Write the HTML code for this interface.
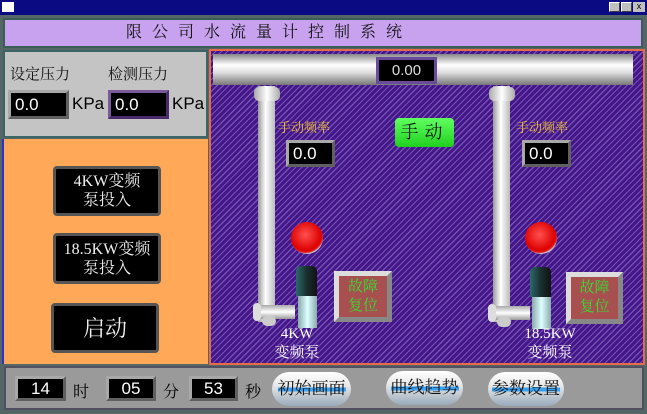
<!DOCTYPE html>
<html><head><meta charset="utf-8"><style>
*{margin:0;padding:0;box-sizing:border-box}
body{width:647px;height:414px;background:#4e6262;position:relative;overflow:hidden;font-family:"Liberation Serif","Noto Serif CJK SC",serif}
.a{position:absolute}
.disp{position:absolute;background:#000;color:#fff;font-family:"Liberation Sans",sans-serif;border:3px solid #a8a8a8;border-right-color:#606060;border-bottom-color:#606060}
.btn{position:absolute;background:#000;color:#f0f0f0;border:3px solid #555;border-radius:4px;text-align:center;font-size:16px;line-height:19px;display:flex;align-items:center;justify-content:center}
.pill{position:absolute;height:34px;border-radius:17px;background:linear-gradient(#fff,#e8e8e8 40%,#9ab 100%);text-align:center;font-size:17px;line-height:34px;color:#111}
.pill span{background:linear-gradient(transparent 45%,#3aa0f0 45%,#3aa0f0 65%,transparent 65%)}
.cn{font-family:"Liberation Serif","Noto Serif CJK SC",serif}
</style></head><body>
<div class="a" style="left:0;top:0;width:647px;height:15px;background:#0a0a82"></div>
<div class="a" style="left:2px;top:2px;width:12px;height:10px;background:#fff"></div>
<div class="a" style="left:609px;top:2px;width:11px;height:10px;background:#c0c0c0;border:1px solid #fff;border-right-color:#404040;border-bottom-color:#404040"></div>
<div class="a" style="left:621px;top:2px;width:11px;height:10px;background:#c0c0c0;border:1px solid #fff;border-right-color:#404040;border-bottom-color:#404040"></div>
<div class="a" style="left:633px;top:2px;width:12px;height:10px;background:#c0c0c0;font:9px 'Liberation Sans';line-height:9px;text-align:center">x</div>
<div class="a" style="left:0;top:15px;width:647px;height:399px;background:#556666"></div>
<div class="a" style="left:3px;top:18px;width:640px;height:30px;background:#c8a2ee;border:2px solid #3c5c58;font-size:16px;letter-spacing:10px;line-height:26px;padding-left:121px;color:#111">限公司水流量计控制系统</div>
<div class="a" style="left:3px;top:50px;width:205px;height:88px;background:#c4c4c4;border:2px solid #3c6464"></div>
<div class="a cn" style="left:10px;top:63px;font-size:15px;color:#111">设定压力</div>
<div class="a cn" style="left:108px;top:63px;font-size:15px;color:#111">检测压力</div>
<div class="disp" style="left:8px;top:90px;width:61px;height:29px;font-size:17px;line-height:23px;padding-left:4px">0.0</div>
<div class="a" style="left:72px;top:94px;font:17px 'Liberation Sans',sans-serif">KPa</div>
<div class="disp" style="left:108px;top:90px;width:61px;height:29px;font-size:17px;line-height:23px;padding-left:4px;border-color:#7a5a9a #4a2a6a #4a2a6a #7a5a9a">0.0</div>
<div class="a" style="left:172px;top:94px;font:17px 'Liberation Sans',sans-serif">KPa</div>
<div class="a" style="left:2px;top:139px;width:206px;height:225px;background:#fea858;border-left:2px solid #3030d0"></div>
<div class="btn" style="left:53px;top:166px;width:108px;height:50px">4KW变频<br>泵投入</div>
<div class="btn" style="left:53px;top:233px;width:108px;height:51px">18.5KW变频<br>泵投入</div>
<div class="btn" style="left:51px;top:303px;width:108px;height:50px;font-size:22px">启动</div>
<div class="a" style="left:209px;top:49px;width:436px;height:316px;border:2px solid #e86a48;background:repeating-linear-gradient(135deg,#45168a 0 3px,#7252b0 3px 4.2px)"></div>
<div class="a" style="left:213px;top:54px;width:420px;height:31px;background:linear-gradient(#888,#fff 35%,#ddd 60%,#777)"></div>
<div class="disp" style="left:376px;top:57px;width:61px;height:27px;font-size:15px;line-height:21px;text-align:center;border-color:#6a4a9a;color:#ddd">0.00</div>
<div class="a" style="left:258px;top:86px;width:17px;height:236px;background:linear-gradient(90deg,#999,#fff 45%,#bbb)"></div>
<div class="a" style="left:254px;top:87px;width:26px;height:14px;border-radius:5px;background:linear-gradient(90deg,#aaa,#fff,#aaa)"></div>
<div class="a" style="left:255px;top:305px;width:40px;height:14px;background:linear-gradient(#aaa,#fff,#999)"></div>
<div class="a" style="left:253px;top:303px;width:8px;height:18px;border-radius:4px;background:#ddd"></div>
<div class="a" style="left:262px;top:316px;width:14px;height:10px;border-radius:5px;background:#ccc"></div>
<div class="a" style="left:493px;top:86px;width:17px;height:236px;background:linear-gradient(90deg,#999,#fff 45%,#bbb)"></div>
<div class="a" style="left:489px;top:87px;width:26px;height:14px;border-radius:5px;background:linear-gradient(90deg,#aaa,#fff,#aaa)"></div>
<div class="a" style="left:490px;top:306px;width:40px;height:14px;background:linear-gradient(#aaa,#fff,#999)"></div>
<div class="a" style="left:488px;top:304px;width:8px;height:18px;border-radius:4px;background:#ddd"></div>
<div class="a" style="left:497px;top:317px;width:14px;height:10px;border-radius:5px;background:#ccc"></div>
<div class="a cn" style="left:278px;top:117px;font-size:13px;color:#f0c030">手动频率</div>
<div class="a cn" style="left:516px;top:117px;font-size:13px;color:#f0c030">手动频率</div>
<div class="disp" style="left:286px;top:140px;width:49px;height:27px;font-size:17px;line-height:21px;padding-left:4px">0.0</div>
<div class="disp" style="left:522px;top:140px;width:49px;height:27px;font-size:17px;line-height:21px;padding-left:4px">0.0</div>
<div class="a cn" style="left:395px;top:118px;width:59px;height:29px;border-radius:4px;background:linear-gradient(#60ff60,#20d020);font-size:18px;line-height:29px;text-align:center;letter-spacing:6px;color:#111">手动</div>
<div class="a" style="left:291px;top:222px;width:32px;height:32px;border-radius:50%;background:radial-gradient(circle at 45% 40%,#ff5050,#d00 60%,#e02020 68%,#c8c8d8 72%)"></div>
<div class="a" style="left:525px;top:222px;width:32px;height:32px;border-radius:50%;background:radial-gradient(circle at 45% 40%,#ff5050,#d00 60%,#e02020 68%,#c8c8d8 72%)"></div>
<div class="a" style="left:296px;top:266px;width:21px;height:30px;border-radius:5px 5px 0 0;background:linear-gradient(90deg,#2a6a6a,#1a3030 50%,#111)"></div>
<div class="a" style="left:298px;top:296px;width:19px;height:32px;background:linear-gradient(90deg,#8aa,#dff,#8aa)"></div>
<div class="a" style="left:530px;top:267px;width:21px;height:30px;border-radius:5px 5px 0 0;background:linear-gradient(90deg,#2a6a6a,#1a3030 50%,#111)"></div>
<div class="a" style="left:532px;top:297px;width:19px;height:32px;background:linear-gradient(90deg,#8aa,#dff,#8aa)"></div>
<div class="a cn" style="left:334px;top:271px;width:58px;height:51px;background:#a85050;border:5px solid #ddd;border-right-color:#888;border-bottom-color:#888;color:#30e030;font-size:15px;line-height:19px;text-align:center;padding-top:2px">故障<br>复位</div>
<div class="a cn" style="left:566px;top:272px;width:57px;height:52px;background:#a85050;border:5px solid #ddd;border-right-color:#888;border-bottom-color:#888;color:#30e030;font-size:15px;line-height:19px;text-align:center;padding-top:2px">故障<br>复位</div>
<div class="a cn" style="left:257px;top:325px;width:80px;text-align:center;color:#fff;font-size:15px;line-height:19px">4KW<br>变频泵</div>
<div class="a cn" style="left:510px;top:325px;width:80px;text-align:center;color:#fff;font-size:15px;line-height:19px">18.5KW<br>变频泵</div>
<div class="a" style="left:4px;top:366px;width:640px;height:44px;background:#9a9a9a;border:2px solid #505060"></div>
<div class="disp" style="left:15px;top:376px;width:51px;height:25px;font-size:17px;line-height:19px;text-align:center">14</div>
<div class="a cn" style="left:73px;top:379px;font-size:16px">时</div>
<div class="disp" style="left:106px;top:376px;width:50px;height:25px;font-size:17px;line-height:19px;text-align:center">05</div>
<div class="a cn" style="left:163px;top:379px;font-size:16px">分</div>
<div class="disp" style="left:189px;top:376px;width:49px;height:25px;font-size:17px;line-height:19px;text-align:center">53</div>
<div class="a cn" style="left:245px;top:379px;font-size:16px">秒</div>
<div class="pill cn" style="left:272px;top:372px;width:79px"><span>初始画面</span></div>
<div class="pill cn" style="left:386px;top:371px;width:77px"><span>曲线趋势</span></div>
<div class="pill cn" style="left:488px;top:372px;width:76px"><span>参数设置</span></div>
</body></html>
